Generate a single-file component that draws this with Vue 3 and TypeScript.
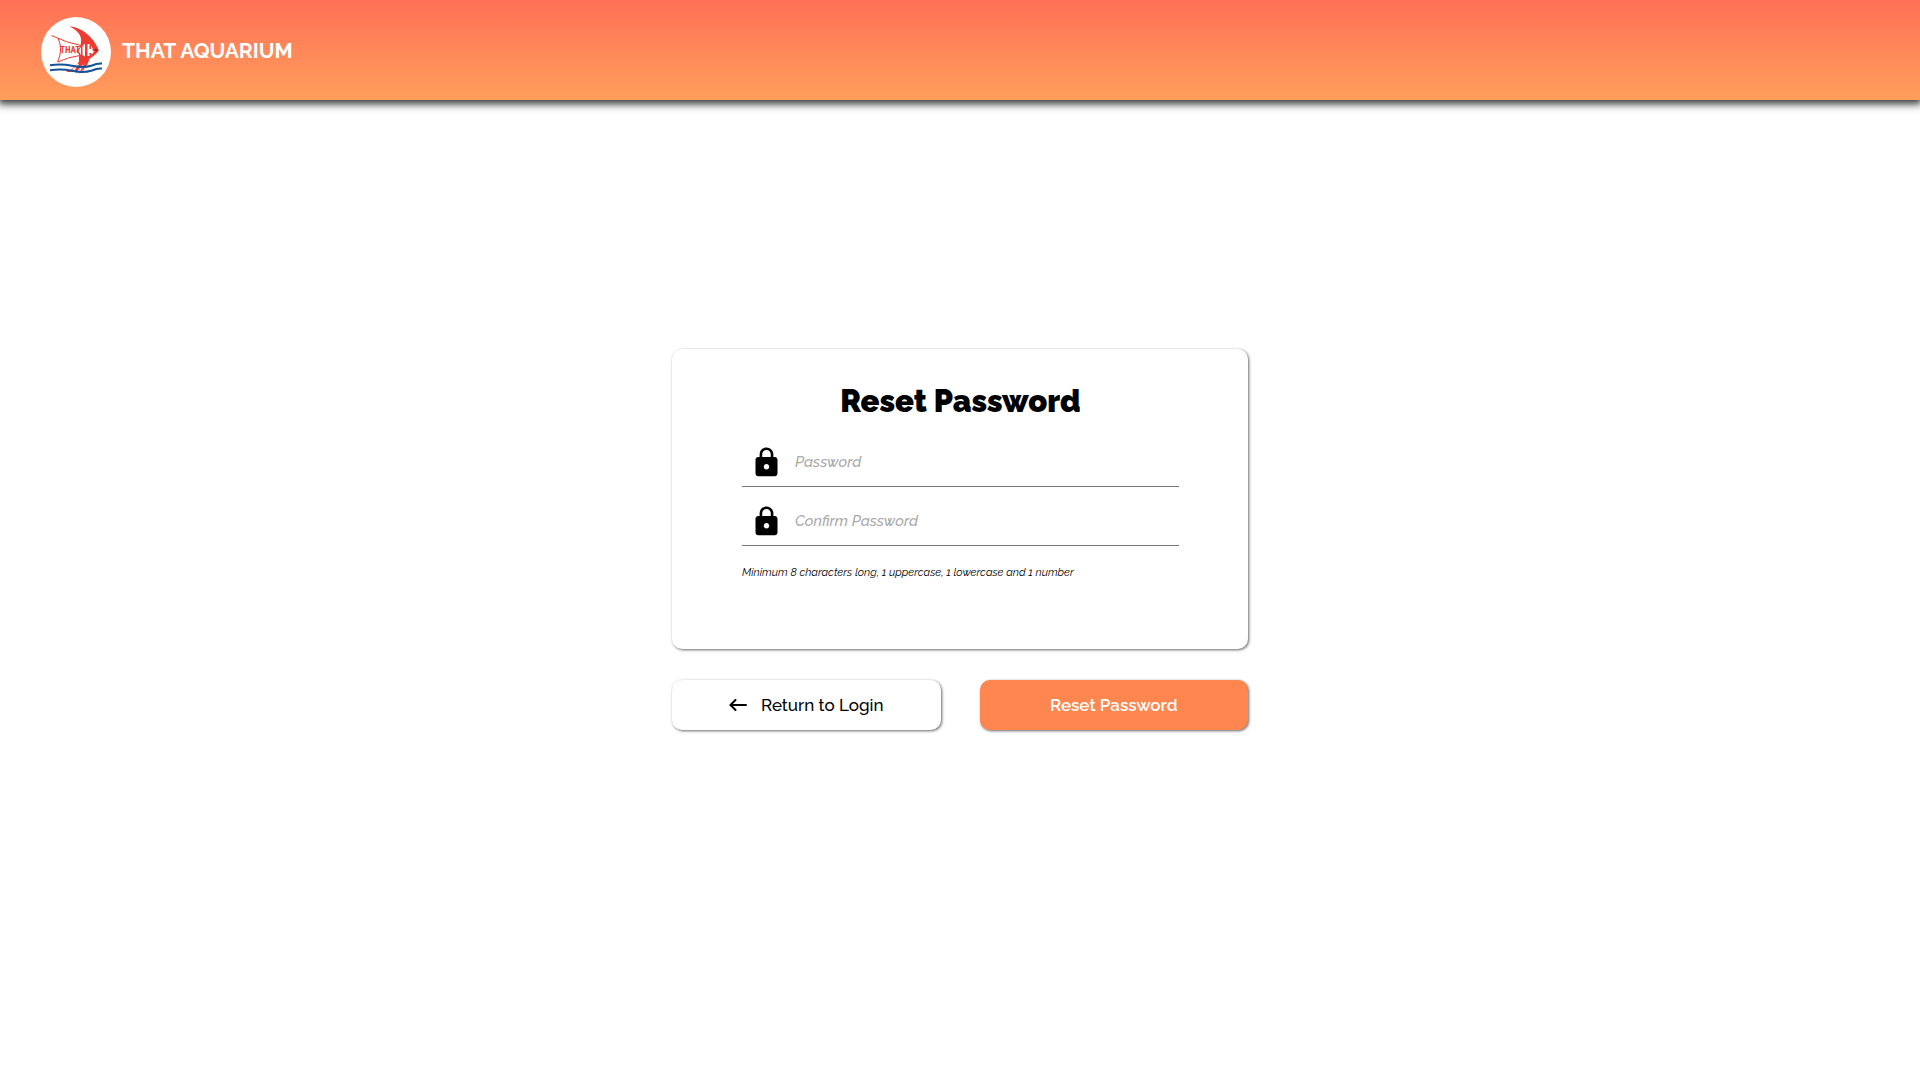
<script setup lang="ts">
import { ref } from 'vue'

interface Field {
  id: string
  label: string
}

const fields: Field[] = [
  { id: 'password', label: 'Password' },
  { id: 'confirm-password', label: 'Confirm Password' },
]
const values = ref<Record<string, string>>({ password: '', 'confirm-password': '' })
</script>

<template>
  <div class="page">
    <header class="header">
      <svg class="logo" viewBox="0 0 70 70" aria-hidden="true">
        <circle cx="35" cy="35" r="35" fill="#fff" />
        <g fill="#ee3a30">
          <path d="M28 9.300C42 10.500 52.500 20.500 58 33.500C53 40 46 42.500 43.500 47L38.500 56.500L42 47L36 54.500L30 55L24.500 55C31 53 34 50 38 44.500V37.500L35.500 34L39 30C42.500 20.500 38 13.500 28 9.300Z" />
          <path d="M48.500 42.500Q45.500 51 38 57Q43 50 45 43Z" />
        </g>
        <g fill="#fff">
          <path d="M40 30L37.500 34L40 38Z" />
          <path d="M41.500 29L44 26.500V39.500L41.500 38Z" />
          <path d="M46.500 27H48.500V32H50V28.500L52 32L51 33L53 34.500L50.500 38V36H48.500V39H46.500Z" />
          <path d="M30 54.500L36.500 46.500L38 47L33 54Z" />
        </g>
        <g fill="none" stroke="#ee3a30">
          <path d="M10.500 18.500Q26 26 40 28.500M17 21Q22.500 33 16.500 45M17 45Q27 40 39 38.500" />
        </g>
        <text x="19" y="36" class="logo-text">THAT</text>
        <circle cx="55" cy="33" r="1" fill="#501c24" />
        <g fill="none" stroke="#14539a" stroke-width="2">
          <path d="M9 48.300Q20 46.300 31 48.800T51 48.500Q56 46.300 61 46.600" />
          <path d="M9 53.300Q20 51.300 31 53.800T51 53.500Q56 51.300 61 51.600" />
        </g>
      </svg>
      <span class="brand">THAT AQUARIUM</span>
    </header>

    <main class="main">
      <form id="reset-form" class="card" @submit.prevent>
        <h1 class="title">Reset Password</h1>
        <div v-for="field in fields" :key="field.id" class="field">
          <label :for="field.id" :aria-label="field.label">
            <svg class="lock" viewBox="0 0 24 24" aria-hidden="true">
              <path d="M18 8h-1V6c0-2.760-2.240-5-5-5S7 3.240 7 6v2H6c-1.100 0-2 .9-2 2v10c0 1.100.9 2 2 2h12c1.100 0 2-.9 2-2V10c0-1.100-.9-2-2-2zm-6 9c-1.100 0-2-.9-2-2s.9-2 2-2 2 .9 2 2-.9 2-2 2zm3.100-9H8.900V6c0-1.710 1.390-3.100 3.100-3.100s3.100 1.390 3.100 3.100v2z" />
            </svg>
          </label>
          <input :id="field.id" v-model="values[field.id]" type="password" :placeholder="field.label" />
        </div>
        <p class="hint">Minimum 8 characters long, 1 uppercase, 1 lowercase and 1 number</p>
      </form>

      <div class="actions">
        <button type="button" class="btn">
          <svg class="arrow" viewBox="0 0 18 12" aria-hidden="true">
            <path d="M17 6H1.500M6.500 1L1.500 6L6.500 11" />
          </svg>
          Return to Login
        </button>
        <button type="submit" form="reset-form" class="btn primary">Reset Password</button>
      </div>
    </main>
  </div>
</template>

<style>
body {
  margin: 0;
  background: #fff;
}
</style>

<style scoped>
.page {
  min-height: 100vh;
  display: flex;
  flex-direction: column;
  font-family: Raleway, "Open Sans", "Noto Sans", sans-serif;
  color: #000;
}
.header {
  height: 100px;
  box-sizing: border-box;
  padding: 4px 41px 0;
  display: flex;
  align-items: center;
  gap: 11px;
  background: linear-gradient(#ff7056, #ff9e5c);
  box-shadow: 0 2px 8px 2px rgba(0, 0, 0, 0.8);
}
.logo {
  width: 70px;
  height: 70px;
}
.logo-text {
  fill: #ee3a30;
  font-family: "Roboto Condensed", "Liberation Sans Narrow", Roboto, sans-serif;
  font-size: 9px;
  font-weight: 700;
}
.brand {
  padding-bottom: 4px;
  color: #fff;
  font-size: 21px;
  font-weight: 700;
}
.main {
  flex: 1;
  width: 30%;
  margin: 0 auto;
  display: flex;
  flex-direction: column;
  justify-content: center;
  gap: 31px;
  padding-bottom: 101px;
}
.card {
  box-sizing: border-box;
  min-height: 300px;
  padding: 30px 69px 30px 70px;
  border-radius: 10px;
  box-shadow: 1px 1px 3px rgba(0, 0, 0, 0.6);
}
.title {
  margin: 0 0 5px;
  font-size: 31px;
  line-height: 44px;
  font-weight: 900;
  text-align: center;
}
.field {
  height: 59px;
  box-sizing: border-box;
  padding: 10px 8px 0;
  display: flex;
  align-items: center;
  gap: 12px;
  border-bottom: 1px solid #777;
}
.lock {
  display: block;
  width: 33px;
  height: 33px;
}
.field input {
  flex: 1;
  min-width: 0;
  padding: 0;
  border: 0;
  outline: 0;
  background: none;
  font: italic 500 15px/24px Raleway, "Open Sans", "Noto Sans", sans-serif;
}
.field input::placeholder {
  color: #a9a9a9;
  opacity: 1;
}
.hint {
  margin: 19px 0 0;
  font-size: 11px;
  line-height: 16px;
  font-style: italic;
}
.actions {
  display: flex;
  gap: 39px;
}
.btn {
  flex: 1;
  height: 50px;
  display: flex;
  align-items: center;
  justify-content: center;
  gap: 14px;
  border: 0;
  border-radius: 10px;
  background: #fff;
  color: #000;
  box-shadow: 1px 1px 3px rgba(0, 0, 0, 0.6);
  font: 500 17px Raleway, "Open Sans", "Noto Sans", sans-serif;
  cursor: pointer;
}
.primary {
  background: #ff864e;
  color: #fff;
  font-weight: 600;
}
.arrow {
  width: 18px;
  height: 12px;
  fill: none;
  stroke: #000;
  stroke-width: 2;
  stroke-linecap: round;
}
</style>
